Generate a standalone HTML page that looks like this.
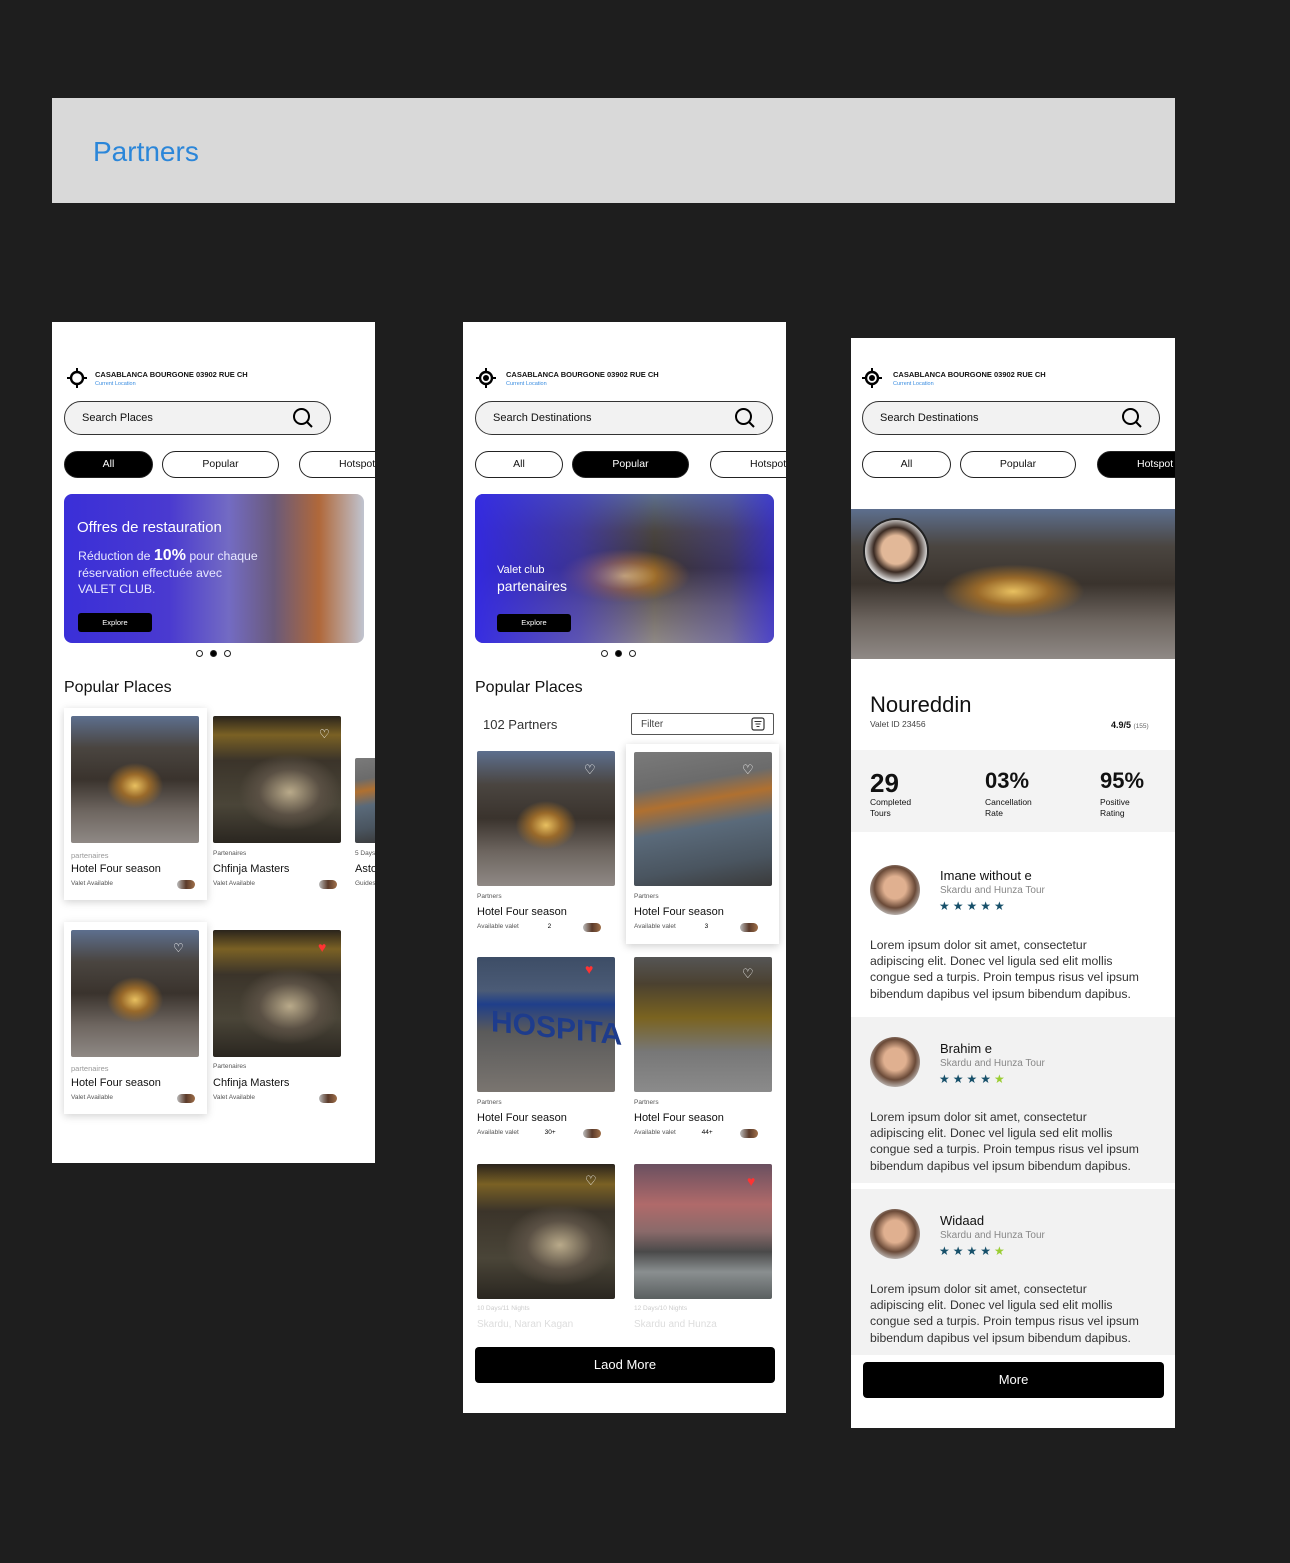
<!DOCTYPE html>
<html><head><meta charset="utf-8"><style>
*{margin:0;padding:0;box-sizing:border-box}
body{width:1290px;height:1563px;background:#1e1e1e;position:relative;overflow:hidden;font-family:"Liberation Sans",sans-serif;color:#111}
.a{position:absolute}
.panel{position:absolute;background:#fff;overflow:hidden}
.loc{position:absolute;font-size:7.5px;font-weight:bold;white-space:nowrap}
.loc small{display:block;color:#3a8de0;font-weight:normal;font-size:5.5px;margin-top:2px}
.search{position:absolute;height:34px;border:1.5px solid #333;border-radius:17px;background:#f2f2f2;font-size:11px;padding:10px 0 0 17px}
.chip{position:absolute;height:27px;border:1.3px solid #222;border-radius:14px;font-size:10.5px;text-align:center;line-height:24px;background:#fff}
.chip.on{background:#000;color:#fff}
.courtyard{background:radial-gradient(ellipse 22% 18% at 50% 55%,#e8c060 0%,#9a6a2a 50%,transparent 100%),linear-gradient(180deg,#5d6f8e 0%,#4a4540 25%,#3a332d 50%,#6e6660 75%,#8f8985 100%)}
.chf{background:radial-gradient(ellipse 40% 30% at 60% 60%,#b9aa8a 0%,#5a5044 60%,transparent 100%),linear-gradient(180deg,#2a241c 0%,#7a6124 15%,#3b342a 35%,#4a4538 70%,#2a2620 100%)}
.bldg{background:linear-gradient(170deg,#7a7a7a 0%,#6b6b6b 25%,#b07030 38%,#5a6a7a 55%,#4a5560 80%,#3a3a3a 100%)}
.hosp{background:linear-gradient(180deg,#3d4d66 0%,#4b5b76 25%,#1f3f8a 35%,#5a5a5a 55%,#7a7570 100%)}
.street{background:linear-gradient(180deg,#555 0%,#4b4130 20%,#7a6320 45%,#777 70%,#8b8b8b 100%)}
.mount{background:linear-gradient(180deg,#6a5060 0%,#b06a6a 30%,#8a6a6a 50%,#4a4a4a 65%,#8a8f90 80%,#5a5f60 100%)}
.img{position:absolute;border-radius:2px}
.t6{position:absolute;font-size:6.5px;color:#555;white-space:nowrap}
.t11{position:absolute;font-size:11px;color:#111;white-space:nowrap}
.av{position:absolute;width:18px;height:9px;border-radius:5px;background:linear-gradient(90deg,#bbb,#5a3a2a,#a0704a)}
.dot{position:absolute;width:7px;height:7px;border-radius:50%;border:1px solid #222}
.rev{position:absolute;left:0;width:324px}
.rev .nm{position:absolute;left:89px;font-size:13px}
.rev .sb{position:absolute;left:89px;font-size:10px;color:#888}
.rev .st{position:absolute;left:88px;font-size:12px;color:#17506a;letter-spacing:3px}
.rev .tx{position:absolute;left:19px;width:305px;font-size:12.2px;line-height:16.2px;color:#333;white-space:nowrap}
.rev .ph{position:absolute;left:19px;width:50px;height:50px;border-radius:50%;background:radial-gradient(circle at 50% 45%,#e0b090 0 30%,#6a4a38 55%,#cfcfcf 80%)}
</style></head><body>

<div class="a" style="left:52px;top:98px;width:1123px;height:105px;background:#d9d9d9"></div>
<div class="a" style="left:93px;top:136px;font-size:28px;color:#2b86d9">Partners</div>

<!-- PANEL 1 -->
<div class="panel" style="left:52px;top:322px;width:323px;height:841px">
 <svg class="a" style="left:15px;top:46px" width="20" height="20" viewBox="0 0 20 20"><circle cx="10" cy="10" r="6" fill="none" stroke="#000" stroke-width="2.4"/><path d="M10 0v4M10 16v4M0 10h4M16 10h4" stroke="#000" stroke-width="2"/></svg>
 <div class="loc" style="left:43px;top:48px">CASABLANCA BOURGONE 03902 RUE CH<small>Current Location</small></div>
 <div class="search" style="left:12px;top:79px;width:267px">Search Places</div>
 <svg class="a" style="left:240px;top:85px" width="22" height="22" viewBox="0 0 22 22"><circle cx="9.5" cy="9.5" r="7.5" fill="none" stroke="#000" stroke-width="2"/><path d="M15 15l5 5" stroke="#000" stroke-width="2"/></svg>
 <div class="chip on" style="left:12px;top:129px;width:89px">All</div>
 <div class="chip" style="left:110px;top:129px;width:117px">Popular</div>
 <div class="chip" style="left:247px;top:129px;width:117px;text-align:left;padding-left:39px">Hotspot</div>
 <div class="img" style="left:12px;top:172px;width:300px;height:149px;border-radius:8px;background:linear-gradient(90deg,#3a2fd8 0%,#4a3ad0 35%,rgba(80,70,180,.8) 55%,#6a5a7a 70%,#b0683a 85%,#c0c4d0 100%)"></div>
 <div class="a" style="left:25px;top:197px;color:#fff;font-size:15px">Offres de restauration</div>
 <div class="a" style="left:26px;top:226px;color:#e8e8ff;font-size:12.3px;line-height:16.5px">Réduction de <b style="font-size:16px;color:#fff">10%</b> pour chaque<br>réservation effectuée avec<br>VALET CLUB.</div>
 <div class="a" style="left:26px;top:291px;width:74px;height:19px;background:#000;border-radius:3px;color:#fff;font-size:7.5px;text-align:center;line-height:19px">Explore</div>
 <div class="dot" style="left:144px;top:328px"></div><div class="dot" style="left:158px;top:328px;background:#000"></div><div class="dot" style="left:172px;top:328px"></div>
 <div class="a" style="left:12px;top:357px;font-size:16px">Popular Places</div>

 <div class="a" style="left:12px;top:386px;width:143px;height:192px;box-shadow:0 2px 8px rgba(0,0,0,.18)"></div>
 <div class="img courtyard" style="left:19px;top:394px;width:128px;height:127px"></div>
 <div class="t6" style="left:19px;top:529px;color:#999;font-size:7.5px">partenaires</div>
 <div class="t11" style="left:19px;top:541px">Hotel Four season</div>
 <div class="t6" style="left:19px;top:558px">Valet Available</div><div class="av" style="left:125px;top:558px"></div>
 <div class="img chf" style="left:161px;top:394px;width:128px;height:127px"></div>
 <div class="t6" style="left:161px;top:528px">Partenaires</div>
 <div class="t11" style="left:161px;top:541px">Chfinja Masters</div>
 <div class="t6" style="left:161px;top:558px">Valet Available</div><div class="av" style="left:267px;top:558px"></div>
 <div class="img bldg" style="left:303px;top:436px;width:30px;height:85px"></div>
 <div class="t6" style="left:303px;top:528px">5 Days</div><div class="t11" style="left:303px;top:541px">Astore</div><div class="t6" style="left:303px;top:558px">Guides</div>

 <div class="a" style="left:12px;top:600px;width:143px;height:192px;box-shadow:0 2px 8px rgba(0,0,0,.18)"></div>
 <div class="img courtyard" style="left:19px;top:608px;width:128px;height:127px"></div>
 <div class="t6" style="left:19px;top:742px;color:#999;font-size:7.5px">partenaires</div>
 <div class="t11" style="left:19px;top:755px">Hotel Four season</div>
 <div class="t6" style="left:19px;top:772px">Valet Available</div><div class="av" style="left:125px;top:772px"></div>
 <div class="img chf" style="left:161px;top:608px;width:128px;height:127px"></div>
 <div class="t6" style="left:161px;top:741px">Partenaires</div>
 <div class="t11" style="left:161px;top:755px">Chfinja Masters</div>
 <div class="t6" style="left:161px;top:772px">Valet Available</div><div class="av" style="left:267px;top:772px"></div>
 <div class="a" style="left:121px;top:619px;color:#fff;font-size:12px">♡</div>
 <div class="a" style="left:267px;top:405px;color:#fff;font-size:12px">♡</div>
 <div class="a" style="left:266px;top:617px;color:#f33;font-size:14px">♥</div>
</div>

<!-- PANEL 2 -->
<div class="panel" style="left:463px;top:322px;width:323px;height:1091px">
 <svg class="a" style="left:13px;top:46px" width="20" height="20" viewBox="0 0 20 20"><circle cx="10" cy="10" r="6" fill="none" stroke="#000" stroke-width="2.4"/><circle cx="10" cy="10" r="3" fill="#000"/><path d="M10 0v4M10 16v4M0 10h4M16 10h4" stroke="#000" stroke-width="2"/></svg>
 <div class="loc" style="left:43px;top:48px">CASABLANCA BOURGONE 03902 RUE CH<small>Current Location</small></div>
 <div class="search" style="left:12px;top:79px;width:298px">Search Destinations</div>
 <svg class="a" style="left:271px;top:85px" width="22" height="22" viewBox="0 0 22 22"><circle cx="9.5" cy="9.5" r="7.5" fill="none" stroke="#000" stroke-width="2"/><path d="M15 15l5 5" stroke="#000" stroke-width="2"/></svg>
 <div class="chip" style="left:12px;top:129px;width:88px">All</div>
 <div class="chip on" style="left:109px;top:129px;width:117px">Popular</div>
 <div class="chip" style="left:247px;top:129px;width:117px;text-align:left;padding-left:39px">Hotspot</div>
 <div class="img courtyard" style="left:12px;top:172px;width:299px;height:149px;border-radius:8px"></div>
 <div class="img" style="left:12px;top:172px;width:299px;height:149px;border-radius:8px;background:linear-gradient(90deg,rgba(50,40,230,.95) 0%,rgba(60,50,210,.6) 35%,rgba(60,50,210,0) 60%,rgba(60,50,220,.3) 85%,rgba(50,40,230,.7) 100%)"></div>
 <div class="a" style="left:34px;top:240px;color:#fff;font-size:11px;line-height:16px">Valet club<br><span style="font-size:14px">partenaires</span></div>
 <div class="a" style="left:34px;top:292px;width:74px;height:18px;background:#000;border-radius:3px;color:#fff;font-size:7.5px;text-align:center;line-height:18px">Explore</div>
 <div class="dot" style="left:138px;top:328px"></div><div class="dot" style="left:152px;top:328px;background:#000"></div><div class="dot" style="left:166px;top:328px"></div>
 <div class="a" style="left:12px;top:357px;font-size:16px">Popular Places</div>
 <div class="a" style="left:20px;top:395px;font-size:13px;color:#333">102 Partners</div>
 <div class="a" style="left:168px;top:391px;width:143px;height:22px;border:1px solid #555;border-radius:2px;font-size:10px;color:#444;padding:5px 0 0 9px">Filter</div>
 <svg class="a" style="left:288px;top:395px" width="14" height="14" viewBox="0 0 14 14"><rect x="1" y="1" width="12" height="12" rx="2" fill="none" stroke="#333" stroke-width="1.2"/><path d="M3.5 4.5h7M4.5 7h5M5.5 9.5h3" stroke="#333"/></svg>

 <div class="a" style="left:163px;top:422px;width:153px;height:200px;box-shadow:0 2px 8px rgba(0,0,0,.2)"></div>
 <div class="img courtyard" style="left:14px;top:429px;width:138px;height:135px"></div>
 <div class="img bldg" style="left:171px;top:430px;width:138px;height:134px"></div>
 <div class="t6" style="left:14px;top:571px">Partners</div><div class="t11" style="left:14px;top:584px">Hotel Four season</div><div class="t6" style="left:14px;top:601px">Available valet <span style="margin-left:27px;color:#000">2</span></div><div class="av" style="left:120px;top:601px"></div>
 <div class="t6" style="left:171px;top:571px">Partners</div><div class="t11" style="left:171px;top:584px">Hotel Four season</div><div class="t6" style="left:171px;top:601px">Available valet <span style="margin-left:27px;color:#000">3</span></div><div class="av" style="left:277px;top:601px"></div>
 <div class="a" style="left:121px;top:440px;color:#fff;font-size:13px">♡</div>
 <div class="a" style="left:279px;top:440px;color:#fff;font-size:13px">♡</div>

 <div class="img hosp" style="left:14px;top:635px;width:138px;height:135px"></div>
 <div class="a" style="left:28px;top:690px;color:#1e3c8c;font-size:30px;font-weight:bold;transform:skewY(6deg)">HOSPITA</div>
 <div class="img street" style="left:171px;top:635px;width:138px;height:135px"></div>
 <div class="t6" style="left:14px;top:777px">Partners</div><div class="t11" style="left:14px;top:790px">Hotel Four season</div><div class="t6" style="left:14px;top:807px">Available valet <span style="margin-left:24px;color:#000">30+</span></div><div class="av" style="left:120px;top:807px"></div>
 <div class="t6" style="left:171px;top:777px">Partners</div><div class="t11" style="left:171px;top:790px">Hotel Four season</div><div class="t6" style="left:171px;top:807px">Available valet <span style="margin-left:24px;color:#000">44+</span></div><div class="av" style="left:277px;top:807px"></div>
 <div class="a" style="left:122px;top:639px;color:#f33;font-size:14px">♥</div>
 <div class="a" style="left:279px;top:644px;color:#fff;font-size:13px">♡</div>

 <div class="img chf" style="left:14px;top:842px;width:138px;height:135px"></div>
 <div class="img mount" style="left:171px;top:842px;width:138px;height:135px"></div>
 <div class="a" style="left:122px;top:851px;color:#fff;font-size:13px">♡</div>
 <div class="a" style="left:284px;top:851px;color:#f33;font-size:14px">♥</div>
 <div class="t6" style="left:14px;top:983px;color:#ccc">10 Days/11 Nights</div><div class="t11" style="left:14px;top:997px;color:#ddd;font-size:10px">Skardu, Naran Kagan</div>
 <div class="t6" style="left:171px;top:983px;color:#ccc">12 Days/10 Nights</div><div class="t11" style="left:171px;top:997px;color:#ddd;font-size:10px">Skardu and Hunza</div>
 <div class="a" style="left:12px;top:1025px;width:300px;height:36px;background:#000;border-radius:4px;color:#fff;font-size:13px;text-align:center;line-height:36px">Laod More</div>
</div>

<!-- PANEL 3 -->
<div class="panel" style="left:851px;top:338px;width:324px;height:1090px">
 <svg class="a" style="left:11px;top:30px" width="20" height="20" viewBox="0 0 20 20"><circle cx="10" cy="10" r="6" fill="none" stroke="#000" stroke-width="2.4"/><circle cx="10" cy="10" r="3" fill="#000"/><path d="M10 0v4M10 16v4M0 10h4M16 10h4" stroke="#000" stroke-width="2"/></svg>
 <div class="loc" style="left:42px;top:32px">CASABLANCA BOURGONE 03902 RUE CH<small>Current Location</small></div>
 <div class="search" style="left:11px;top:63px;width:298px">Search Destinations</div>
 <svg class="a" style="left:270px;top:69px" width="22" height="22" viewBox="0 0 22 22"><circle cx="9.5" cy="9.5" r="7.5" fill="none" stroke="#000" stroke-width="2"/><path d="M15 15l5 5" stroke="#000" stroke-width="2"/></svg>
 <div class="chip" style="left:11px;top:113px;width:89px">All</div>
 <div class="chip" style="left:109px;top:113px;width:116px">Popular</div>
 <div class="chip on" style="left:246px;top:113px;width:117px;text-align:left;padding-left:39px">Hotspot</div>
 <div class="img courtyard" style="left:0;top:171px;width:324px;height:150px;border-radius:0"></div>
 <div class="a" style="left:12px;top:180px;width:66px;height:66px;border-radius:50%;border:2px solid #222;background:radial-gradient(circle at 50% 48%,#e2b898 0 32%,#3a2a22 50%,#e8e8e8 72%)"></div>
 <div class="a" style="left:19px;top:354px;font-size:22px">Noureddin</div>
 <div class="a" style="left:19px;top:381px;font-size:8.5px;color:#444">Valet ID 23456</div>
 <div class="a" style="left:260px;top:382px;font-size:9px;font-weight:bold">4.9/5 <span style="font-weight:normal;font-size:6.5px;color:#666">(155)</span></div>
 <div class="a" style="left:0;top:412px;width:324px;height:82px;background:#f3f3f3"></div>
 <div class="a" style="left:19px;top:430px;font-size:26px;font-weight:bold">29</div>
 <div class="a" style="left:134px;top:430px;font-size:22px;font-weight:bold">03%</div>
 <div class="a" style="left:249px;top:430px;font-size:22px;font-weight:bold">95%</div>
 <div class="a" style="left:19px;top:459px;font-size:8.5px;line-height:11px">Completed<br>Tours</div>
 <div class="a" style="left:134px;top:459px;font-size:8.5px;line-height:11px">Cancellation<br>Rate</div>
 <div class="a" style="left:249px;top:459px;font-size:8.5px;line-height:11px">Positive<br>Rating</div>

 <div class="rev" style="top:495px;height:184px;background:#fff">
  <div class="ph" style="top:32px"></div>
  <div class="nm" style="top:35px">Imane without e</div><div class="sb" style="top:52px">Skardu and Hunza Tour</div><div class="st" style="top:66px">★★★★★</div>
  <div class="tx" style="top:104px">Lorem ipsum dolor sit amet, consectetur<br>adipiscing elit. Donec vel ligula sed elit mollis<br>congue sed a turpis. Proin tempus risus vel ipsum<br>bibendum dapibus vel ipsum bibendum dapibus.</div>
 </div>
 <div class="rev" style="top:679px;height:166px;background:#f2f2f2">
  <div class="ph" style="top:20px"></div>
  <div class="nm" style="top:24px">Brahim e</div><div class="sb" style="top:41px">Skardu and Hunza Tour</div><div class="st" style="top:55px">★★★★<span style="color:#9acd32">★</span></div>
  <div class="tx" style="top:92px">Lorem ipsum dolor sit amet, consectetur<br>adipiscing elit. Donec vel ligula sed elit mollis<br>congue sed a turpis. Proin tempus risus vel ipsum<br>bibendum dapibus vel ipsum bibendum dapibus.</div>
 </div>
 <div class="rev" style="top:851px;height:166px;background:#f2f2f2">
  <div class="ph" style="top:20px"></div>
  <div class="nm" style="top:24px">Widaad</div><div class="sb" style="top:41px">Skardu and Hunza Tour</div><div class="st" style="top:55px">★★★★<span style="color:#9acd32">★</span></div>
  <div class="tx" style="top:92px">Lorem ipsum dolor sit amet, consectetur<br>adipiscing elit. Donec vel ligula sed elit mollis<br>congue sed a turpis. Proin tempus risus vel ipsum<br>bibendum dapibus vel ipsum bibendum dapibus.</div>
 </div>
 <div class="a" style="left:12px;top:1024px;width:301px;height:36px;background:#000;border-radius:4px;color:#fff;font-size:13px;text-align:center;line-height:36px">More</div>
</div>
</body></html>
